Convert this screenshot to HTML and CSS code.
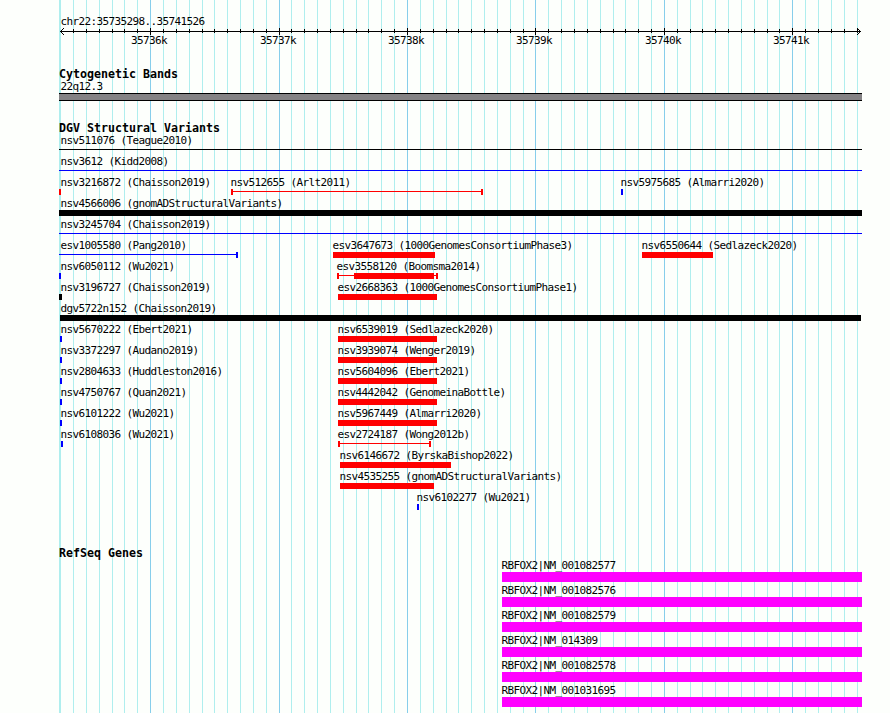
FILE: index.html
```html
<!DOCTYPE html>
<html lang="en">
<head>
<meta charset="utf-8">
<title>chr22:35735298..35741526</title>
<link rel="stylesheet" href="styles.css">
</head>
<body>
<main class="browser">
  <svg class="gridlines" id="gridlines" width="803" height="713" shape-rendering="crispEdges" aria-hidden="true"></svg>
  <div class="tracks">
    <section class="ruler">
      <div class="label region">chr22:35735298..35741526</div>
      <svg class="axis" id="axis" width="803" height="9" shape-rendering="crispEdges"></svg>
      <div class="ticks" id="ticks"></div>
    </section>
    <section class="cytobands">
      <h2 class="heading">Cytogenetic Bands</h2>
      <div class="label region">22q12.3</div>
      <div class="band"></div>
    </section>
    <section class="variants">
      <h2 class="heading">DGV Structural Variants</h2>
      <div id="variants"></div>
    </section>
    <section class="genes">
      <h2 class="heading">RefSeq Genes</h2>
      <div id="genes"></div>
    </section>
  </div>
</main>
<script src="tracks.js"></script>
</body>
</html>
```
FILE: styles.css
```css
body {
  margin: 0;
  background: #fdfffc;
  color: #000;
  font-family: "DejaVu Sans Mono", monospace;
}

.browser {
  position: relative;
  width: 803px;
  height: 713px;
  margin-left: 59px;
  overflow: hidden;
}

.gridlines {
  position: absolute;
  top: 0;
  left: 0;
}

.minor { fill: #afeeee; }
.major { fill: #87ceeb; }

.tracks {
  position: relative;
}

.label {
  box-sizing: border-box;
  padding-top: 1px;
  font-size: 11px;
  line-height: 12px;
  height: 13px;
  letter-spacing: -0.622px;
  white-space: pre;
}

.region { margin-left: 1px; }
.region,
.feature .label { padding-left: 0.5px; }

.heading {
  margin: 0;
  font-size: 11.63px;
  line-height: 12px;
  height: 12px;
  font-weight: bold;
  white-space: pre;
}

.ruler {
  padding-top: 15px;
  height: 53px;
}

.axis {
  display: block;
  margin-top: -1px;
}

.ticks { display: grid; margin-top: -2px; }
.ticks .label { grid-area: 1 / 1; }

.cytobands { height: 54px; }

.band {
  box-sizing: border-box;
  height: 8px;
  border: solid #000;
  border-width: 1px 0;
  background: #848284;
}

.variants { height: 425px; }

.row {
  display: grid;
  grid-template-columns: 803px;
  height: 21px;
}

.feature {
  grid-area: 1 / 1;
  display: flex;
  flex-direction: column;
}

.glyph { display: block; }

.row.gene { height: 25px; }

.red { fill: #f00; }
.blue { fill: #00f; }
.black { fill: #000; }
.magenta { fill: #f0f; }
```
FILE: tracks.js
```js
const ORIGIN = 59;
const REGION_START = 35735298;
const SCALE = 800 / 6229;
const xOf = bp => Math.round(60 + (bp - REGION_START) * SCALE) - ORIGIN;
const rect = (x, y, w, h, cls) => `<rect x="${x}" y="${y}" width="${w}" height="${h}" class="${cls}"/>`;

let lines = rect(0, 0, 2, 713, "minor");
let axis = rect(1, 4, 801, 1, "black");
let ticks = "";
for (let bp = 35735400; bp <= 35741500; bp += 100) {
  const x = xOf(bp);
  const major = bp % 1000 === 0;
  lines += rect(x, 0, 1, 713, major ? "major" : "minor");
  axis += major ? rect(x, 1, 1, 7, "black") : rect(x, 2, 1, 4, "black");
  if (major) ticks += `<div class="label" style="margin-left:${x - 19}px">${bp / 1000}k</div>`;
}
for (let i = 1; i <= 3; i++) {
  for (const y of [4 - i, 4 + i]) {
    axis += rect(1 + i, y, 1, 1, "black") + rect(801 - i, y, 1, 1, "black");
  }
}
document.getElementById("gridlines").innerHTML = lines;
document.getElementById("axis").innerHTML = axis;
document.getElementById("ticks").innerHTML = ticks;

// Each feature: label, colour, shape, start, end, optional thick start and end.
const variants = [
  [["nsv511076 (Teague2010)", "black", "line", 59, 862]],
  [["nsv3612 (Kidd2008)", "blue", "line", 59, 862]],
  [["nsv3216872 (Chaisson2019)", "red", "bar", 59, 61],
   ["nsv512655 (Arlt2011)", "red", "span", 231, 483],
   ["nsv5975685 (Almarri2020)", "blue", "bar", 621, 623]],
  [["nsv4566006 (gnomADStructuralVariants)", "black", "bar", 59, 862]],
  [["nsv3245704 (Chaisson2019)", "blue", "line", 59, 862]],
  [["esv1005580 (Pang2010)", "blue", "open", 59, 238],
   ["esv3647673 (1000GenomesConsortiumPhase3)", "red", "bar", 333, 435],
   ["nsv6550644 (Sedlazeck2020)", "red", "bar", 642, 713]],
  [["nsv6050112 (Wu2021)", "blue", "bar", 59, 61],
   ["esv3558120 (Boomsma2014)", "red", "span", 337, 438, 354, 434]],
  [["nsv3196727 (Chaisson2019)", "black", "bar", 59, 62],
   ["esv2668363 (1000GenomesConsortiumPhase1)", "red", "bar", 338, 437]],
  [["dgv5722n152 (Chaisson2019)", "black", "bar", 60, 861]],
  [["nsv5670222 (Ebert2021)", "blue", "bar", 60, 62],
   ["nsv6539019 (Sedlazeck2020)", "red", "bar", 338, 437]],
  [["nsv3372297 (Audano2019)", "blue", "bar", 60, 62],
   ["nsv3939074 (Wenger2019)", "red", "bar", 338, 437]],
  [["nsv2804633 (Huddleston2016)", "blue", "bar", 60, 62],
   ["nsv5604096 (Ebert2021)", "red", "bar", 338, 437]],
  [["nsv4750767 (Quan2021)", "blue", "bar", 60, 62],
   ["nsv4442042 (GenomeinaBottle)", "red", "bar", 338, 437]],
  [["nsv6101222 (Wu2021)", "blue", "bar", 60, 62],
   ["nsv5967449 (Almarri2020)", "red", "bar", 338, 437]],
  [["nsv6108036 (Wu2021)", "blue", "bar", 61, 63],
   ["esv2724187 (Wong2012b)", "red", "span", 338, 431]],
  [["nsv6146672 (ByrskaBishop2022)", "red", "bar", 340, 451]],
  [["nsv4535255 (gnomADStructuralVariants)", "red", "bar", 340, 434]],
  [["nsv6102277 (Wu2021)", "blue", "bar", 417, 419]]
];
const genes = ["001082577", "001082576", "001082579", "014309", "001082578", "001031695"]
  .map(id => [["RBFOX2|NM_" + id, "magenta", "bar", 502, 862]]);

function feature([name, color, shape, start, end, thickStart, thickEnd], height) {
  const w = end - start;
  let shapes = shape === "bar" ? rect(0, 0, w, height, color) : rect(0, 2, w, 1, color);
  if (shape === "span") shapes += rect(0, 0, 2, height, color);
  if (shape === "span" || shape === "open") shapes += rect(w - 2, 0, 2, height, color);
  if (thickStart) shapes += rect(thickStart - start, 0, thickEnd - thickStart, height, color);
  const labelX = Math.max(start, 61) - 1 - ORIGIN;
  return `<div class="feature">
    <div class="label" style="margin-left:${labelX}px">${name}</div>
    <svg class="glyph" width="${w}" height="${height}" shape-rendering="crispEdges" style="margin-left:${start - ORIGIN}px">${shapes}</svg>
  </div>`;
}
function draw(id, rows, height, cls) {
  document.getElementById(id).innerHTML = rows
    .map(row => `<div class="row ${cls}">${row.map(f => feature(f, height)).join("")}</div>`).join("");
}
draw("variants", variants, 6, "variant");
draw("genes", genes, 10, "gene");
```
